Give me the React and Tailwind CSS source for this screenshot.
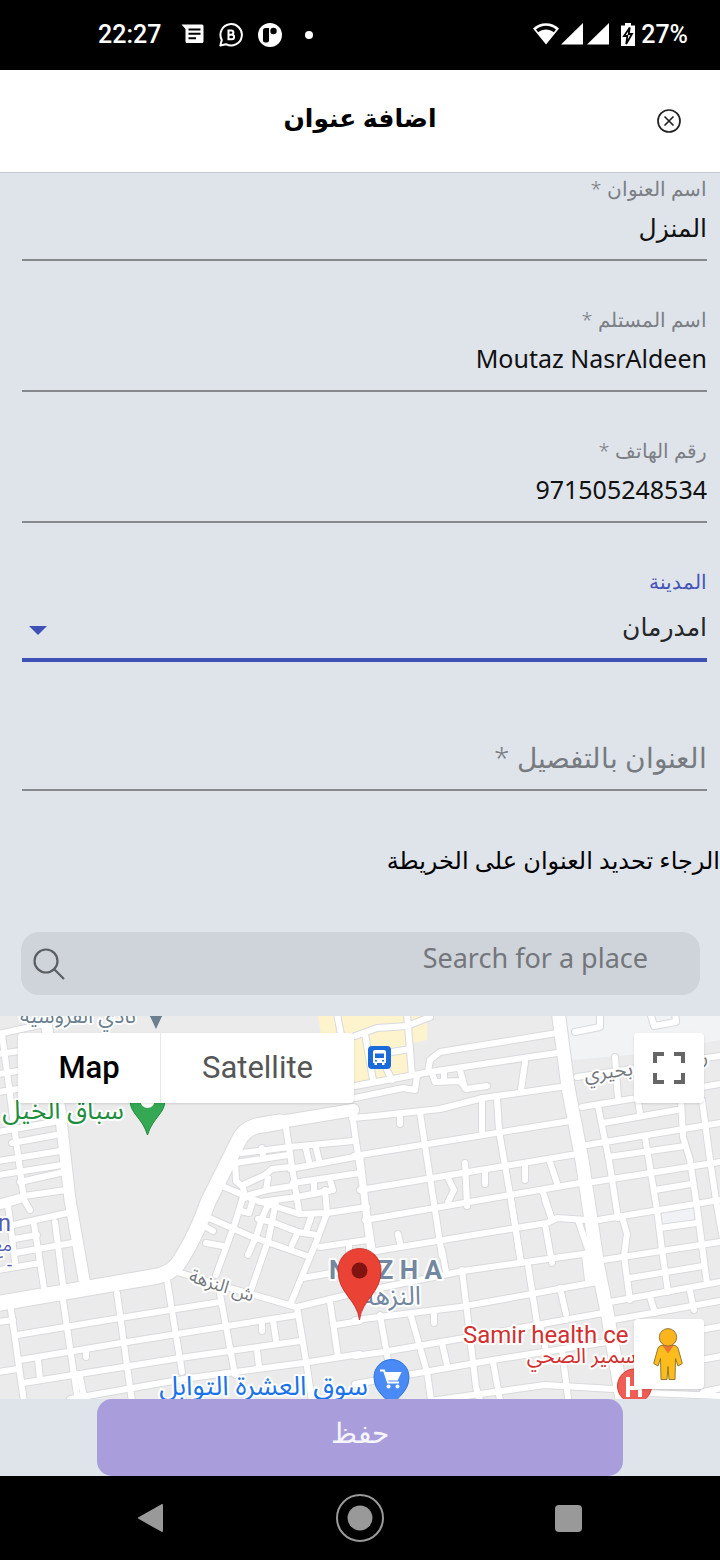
import React from "react";

const AREAS = [
  { fill: "#fdf3cd", d: "M318 1016H427V1040L413 1043V1078L330 1092Z" },
  { fill: "#f1f3f4", d: "M562 1016H720V1040L640 1054L572 1060Z" },
  { fill: "#f0f2f5", d: "M660 1214L694 1208L696 1222L662 1227Z" },
];

const MAIN_ROADS = [
  { w: 11, d: "M45 1016L60 1110L70 1200L85 1285" },
  { w: 15, d: "M-5 1304L158 1276Q172 1273 180 1261Q198 1232 208 1202L238 1142Q243 1130 256 1126L280 1122" },
  { w: 12, d: "M256 1126L353 1110" },
  { w: 13, d: "M558 1010L568 1087L582 1160L598 1267L608 1317L623 1405" },
];

const STREETS = [
  // blocks north of the centre
  "M352 1118L375 1116L440 1109L483 1098L567 1086",
  "M355 1086L430 1072L557 1053",
  "M428 1072L430 1060L440 1052L557 1033",
  "M355 1098L403 1088L415 1090L417 1076",
  "M355 1036L377 1028L407 1026L430 1017",
  "M407 1014L412 1075",
  "M365 1034L373 1080",
  "M337 1014L344 1050",
  "M392 1052L410 1049M387 1070L392 1080",
  "M432 1073L435 1082L460 1081L466 1089L487 1086M460 1070L465 1088M444 1073V1080",
  "M525 1062L521 1090",
  "M354 1156L570 1121",
  "M360 1190L577 1154",
  "M365 1220L580 1183",
  "M420 1113L435 1210L442 1256",
  "M482 1098V1131",
  "M497 1098L499 1131L511 1200L521 1263",
  "M400 1115V1124",
  "M550 1162L557 1183M543 1192L552 1220M525 1165V1180M485 1172V1184M465 1163L467 1204M448 1178L454 1190L448 1202",
  // small irregular blocks
  "M241 1153L290 1147L353 1141",
  "M235 1163L288 1155",
  "M290 1169L360 1156",
  "M243 1185L265 1175L272 1169L290 1167",
  "M293 1183L360 1173",
  "M243 1197L267 1190L293 1186",
  "M260 1202L297 1197L323 1192L333 1190L330 1180",
  "M268 1178L266 1190M262 1148L263 1156M314 1182V1194M306 1149L309 1162M316 1148L319 1160",
  "M286 1128L299 1212",
  "M352 1113L363 1190L370 1250",
  "M235 1160L236 1181L243 1187L245 1198",
  "M222 1186L255 1200L299 1214L327 1213L367 1207",
  "M325 1190L327 1213",
  "M320 1247L367 1240M303 1278L342 1271M349 1243V1252",
  "M207 1217L250 1236L310 1257",
  "M243 1197L235 1223L216 1275",
  "M253 1200L249 1213L241 1211",
  "M276 1202L268 1241L251 1290",
  "M268 1205L262 1218L257 1234L248 1255",
  "M258 1219L272 1222L298 1232L316 1235",
  "M298 1232L292 1245M312 1214L306 1232",
  "M327 1213L317 1240L290 1305",
  "M206 1227L213 1231M206 1243L223 1246",
  "M177 1272L230 1288L296 1307",
  "M360 1155L366 1207L373 1252",
  // south of the centre
  "M370 1252L547 1223L557 1218L587 1220",
  "M375 1289L463 1271L590 1253",
  "M355 1320L460 1307L597 1282",
  "M355 1356L383 1352L470 1337L603 1313",
  "M355 1384L493 1360L607 1342",
  "M430 1401L545 1385L613 1389",
  "M400 1243L398 1234M467 1204V1206",
  "M511 1200L521 1263M545 1224L552 1263M545 1200L552 1220",
  "M528 1265L537 1323M560 1288L566 1314M578 1220L590 1255L592 1282M585 1255L588 1280",
  "M442 1250L446 1272M462 1270L476 1387L480 1400",
  "M380 1315L388 1360M411 1316L427 1372L431 1400M434 1313V1323M442 1343L447 1365",
  "M493 1362L500 1400M562 1350L568 1398M540 1325L546 1350",
  // east side
  "M577 1077L720 1056",
  "M582 1107L637 1098L720 1084",
  "M603 1123L677 1110",
  "M587 1145L720 1123",
  "M608 1157L685 1146",
  "M593 1182L720 1162",
  "M655 1190L691 1184",
  "M598 1220L720 1200",
  "M660 1228L697 1223",
  "M603 1260L720 1242",
  "M630 1278L703 1266",
  "M610 1302L720 1282",
  "M613 1320L720 1301",
  "M615 1057L618 1099M638 1100L640 1114M598 1106L609 1160L618 1218",
  "M623 1220L627 1234L624 1256L630 1300",
  "M645 1137L657 1210L662 1250L668 1292",
  "M681 1100L683 1137L690 1160L697 1207L707 1284",
  "M702 1100L710 1160L716 1200L724 1245",
  "M650 1297L655 1313M690 1291L694 1310",
  "M575 1032L600 1027V1014M650 1012L654 1026L676 1022L675 1012",
  "M700 1330L722 1326M700 1360L722 1356M703 1392L722 1388M650 1393L722 1396",
  // west side, north of the avenue
  "M-2 1034L44 1024M-2 1054L20 1051M-2 1074L50 1066M-2 1092L30 1087",
  "M2 1034L12 1110L24 1200L30 1210",
  "M-2 1132L54 1122M12 1143L56 1135M-2 1161L60 1151M-2 1175L62 1165M20 1182L64 1172M-2 1203L24 1196L66 1190",
  "M-2 1207L20 1200M13 1225L67 1213M14 1239L37 1235M15 1253L72 1243M-2 1270L40 1263",
  "M8 1205L15 1262M34 1224L44 1288M55 1222L63 1285",
  // west side, south of the avenue
  "M17 1335L120 1318L220 1302",
  "M20 1360L127 1342L297 1315",
  "M23 1383L180 1358L300 1341",
  "M70 1399L190 1378L303 1363L360 1354",
  "M297 1307L347 1295M336 1325L360 1321",
  "M10 1303L24 1402M63 1300L78 1402M117 1293L132 1402M167 1280L182 1372M220 1294L235 1375",
  "M297 1307L307 1367L312 1402M330 1302L338 1357M273 1320L276 1340M262 1322V1331M257 1350L259 1367",
  "M38 1360L40 1380M80 1377L85 1402M86 1352V1357M-2 1322L13 1320M-2 1372L18 1369",
];

function StatusBar() {
  return (
    <div dir="ltr" className="flex h-[70px] items-center justify-between bg-black pr-8 pl-[98px] text-white">
      <div className="flex items-center">
        <span className="font-[Roboto] text-[25px] leading-8 font-medium">22:27</span>
        <svg className="ml-5 h-6 w-6" viewBox="0 0 24 24" fill="currentColor" aria-hidden="true">
          <path d="M.5 1.500H21A1.500 1.500 0 0 1 22.500 3V18.500A1.500 1.500 0 0 1 21 20H6A1.500 1.500 0 0 1 4.500 18.500V6ZM7.500 5.500v2h12v-2ZM7.500 9.800v2h12v-2Zm0 4.400v2h7.500v-2Z" fillRule="evenodd" />
        </svg>
        <svg className="ml-3.5 h-6 w-6" viewBox="0 0 24 24" fill="none" stroke="currentColor" aria-hidden="true">
          <path d="M1.300 22.500L2.800 17A10.700 10.700 0 1 1 7 21.200Z" strokeWidth="2" strokeLinejoin="round" />
          <path d="M9.500 7.500h2.800a2.100 2.100 0 0 1 0 4.200H9.500ZM9.500 11.700h3.300a2.300 2.300 0 0 1 0 4.600H9.500Z" strokeWidth="2" />
        </svg>
        <svg className="ml-[15px] h-6 w-6" viewBox="0 0 24 24" aria-hidden="true">
          <circle cx="12" cy="12" r="12" fill="#fff" />
          <path d="M5 7.500A2.500 2.500 0 0 1 7.500 5H11V17.500A2 2 0 0 1 9 19.500H7A2 2 0 0 1 5 17.500Z" fill="#000" />
          <circle cx="15.500" cy="8" r="3.200" fill="#000" />
        </svg>
        <span className="ml-[23px] h-2 w-2 rounded-full bg-white" />
      </div>
      <div className="flex items-center">
        <svg className="h-6 w-[26px]" viewBox="0 0 26 24" aria-hidden="true">
          <path d="M0 5.500C7-1.500 19-1.500 26 5.500L13 21.500Z" fill="#fff" />
          <path d="M3 6.500C9 1.500 17 1.500 23 6.500L20.800 9.200C16 5.500 10 5.500 5.200 9.200Z" fill="#000" />
        </svg>
        <svg className="ml-0.5 h-6 w-[22px]" viewBox="0 0 22 24" fill="#fff" aria-hidden="true"><path d="M22 0v21.500H0Z" /></svg>
        <svg className="ml-1 h-6 w-[22px]" viewBox="0 0 22 24" fill="#fff" aria-hidden="true"><path d="M22 0v21.500H0Z" /></svg>
        <svg className="ml-3 h-6 w-3.5" viewBox="0 0 14 24" aria-hidden="true">
          <path d="M4 0h6v2.500h4V23H0V2.500h4Z" fill="#fff" />
          <path d="M8.800 4.500L3 13H6.300L5.200 21L11 11H7.700Z" fill="#fff" stroke="#000" strokeWidth="1.800" />
        </svg>
        <span className="ml-1.5 font-[Roboto] text-[25px] leading-8 font-medium">27%</span>
      </div>
    </div>
  );
}

function TextField({ id, label, value, type = "text" }) {
  return (
    <div className="flex flex-col">
      <label htmlFor={id} className="h-8 text-xl leading-8 font-light text-[#7c7f84]">{label}</label>
      <input
        id={id}
        type={type}
        dir="rtl"
        defaultValue={value}
        className="h-14 w-full border-b-2 border-[#85898d] bg-transparent pb-2.5 text-right text-[25px] text-[#111] outline-none"
      />
    </div>
  );
}

function MapView() {
  return (
    <section dir="ltr" className="relative h-[383px] overflow-hidden bg-[#ebebec] font-[Roboto]">
      <svg className="h-full w-full" viewBox="0 1016 720 383" preserveAspectRatio="xMidYMid slice" role="img" aria-label="Map">
        {AREAS.map((a) => <path key={a.d} d={a.d} fill={a.fill} />)}
        <g fill="none" strokeLinecap="round" strokeLinejoin="round">
          <g stroke="#d9dadd">
            {STREETS.map((d) => <path key={d} d={d} strokeWidth="8" />)}
            {MAIN_ROADS.map((r) => <path key={r.d} d={r.d} strokeWidth={r.w + 2} />)}
          </g>
          <g stroke="#fff">
            {STREETS.map((d) => <path key={d} d={d} strokeWidth="6" />)}
            {MAIN_ROADS.map((r) => <path key={r.d} d={r.d} strokeWidth={r.w} />)}
          </g>
        </g>
        <g stroke="#fff" strokeWidth="4" strokeLinejoin="round" paintOrder="stroke" fontFamily="Roboto, 'Noto Sans Arabic', 'DejaVu Sans', sans-serif">
          <text x="20" y="1023" fontSize="21" fill="#6b7f8f">نادي الفروسية</text>
          <text x="124" y="1119" fontSize="26" fill="#1e8e3e" textAnchor="end">سباق الخيل</text>
          <text x="585" y="1081" fontSize="20" fill="#75797e" transform="rotate(-7 585 1081)">ب بحيري</text>
          <text x="701" y="1064" fontSize="20" fill="#75797e">ر</text>
          <text x="11" y="1231" fontSize="24" fill="#5358b5" textAnchor="end">n</text>
          <text x="12" y="1251" fontSize="18" fill="#5358b5" textAnchor="end">مع</text>
          <text x="12" y="1271" fontSize="18" fill="#5358b5" textAnchor="end">-</text>
          <text x="188" y="1281" fontSize="18" fill="#75797e" transform="rotate(18 188 1281)">ش النزهة</text>
          <text x="329" y="1279" fontSize="26" fontWeight="700" fill="#7487a0">N U Z H A</text>
          <text x="421" y="1305" fontSize="26" fill="#7487a0" textAnchor="end">النزهة</text>
          <text x="368" y="1395" fontSize="27" fill="#1a73e8" textAnchor="end">سوق العشرة التوابل</text>
          <text x="636" y="1363" fontSize="21" fill="#d32f2f" textAnchor="end">سمير الصحي</text>
          <text x="463" y="1343" fontSize="24" fill="#d32f2f">Samir health ce</text>
        </g>
        <path d="M149 1014H163L156 1029Z" fill="#6b7f8f" />
        <path d="M130 1100C130 1114 142 1117 147.500 1135C153 1117 165 1114 165 1100Z" fill="#34a853" stroke="#1e8e3e" />
        <circle cx="147.500" cy="1101" r="7" fill="#fff" />
        <rect x="368" y="1046" width="23" height="23" rx="4" fill="#1a6ad9" />
        <path d="M375 1050H384Q386 1050 386 1052V1063H384.500V1065H382V1063H377V1065H374.500V1063H373V1052Q373 1050 375 1050Z" fill="#fff" />
        <path d="M375 1053.500H384V1058H375Z" fill="#1a6ad9" />
        <circle cx="376" cy="1060.700" r="1" fill="#1a6ad9" />
        <circle cx="383" cy="1060.700" r="1" fill="#1a6ad9" />
        <path d="M391.500 1410C389 1397 374 1394 374 1377A17.500 17.500 0 0 1 409 1377C409 1394 394 1397 391.500 1410Z" fill="#4a8af4" stroke="#2f74e0" />
        <g fill="none" stroke="#fff" strokeWidth="2">
          <path d="M380 1370.500H384L388 1382.500H399" />
          <path d="M385.500 1373H400L397 1379.500H388Z" fill="#fff" />
        </g>
        <circle cx="388.500" cy="1386.500" r="2" fill="#fff" />
        <circle cx="397.500" cy="1386.500" r="2" fill="#fff" />
        <circle cx="634.500" cy="1386" r="17" fill="#ee5e56" stroke="#d93a33" />
        <path d="M628 1377V1397M640 1377V1397M628 1388H640" stroke="#fff" strokeWidth="4" fill="none" />
        <path d="M359.500 1320C357 1299 338 1294 338 1270A21.500 21.500 0 0 1 381 1270C381 1294 362 1299 359.500 1320Z" fill="#ea4335" stroke="#c5221f" strokeWidth="0.800" />
        <circle cx="359.500" cy="1270.500" r="8" fill="#811411" />
      </svg>
      <div className="absolute top-[17px] left-[18px] flex h-[70px] rounded-sm bg-white text-[31px] shadow">
        <button type="button" className="w-[142px] font-medium text-black">Map</button>
        <button type="button" className="w-[194px] border-l border-[#e8e8e8] text-[#565656]">Satellite</button>
      </div>
      <button type="button" aria-label="Fullscreen" className="absolute top-[17px] right-4 flex h-[70px] w-[70px] items-center justify-center rounded-sm bg-white shadow">
        <svg className="h-8 w-8" viewBox="0 0 32 32" fill="none" stroke="#666" strokeWidth="4" aria-hidden="true">
          <path d="M2 11V2H11M21 2H30V11M30 21V30H21M11 30H2V21" />
        </svg>
      </button>
      <button type="button" aria-label="Street View" className="absolute right-4 bottom-2.5 flex h-[70px] w-[70px] items-center justify-center rounded-sm bg-white pr-0.5 shadow">
        <svg className="h-[52px] w-[30px]" viewBox="0 0 30 52" stroke="#8a6d2f" strokeWidth="0.900" strokeLinejoin="round" aria-hidden="true">
          <path d="M8 17.500H22Q24.500 18 25.300 21L29.300 35.500L25 38L22.500 30.500L22 51.500H16L15 38.500L14 51.500H8L7.500 30.500L5 38L.7 35.500L4.700 21Q5.500 18 8 17.500Z" fill="#fbbc1c" />
          <path d="M9.500 17.500H20.500L15 25.500Z" fill="#ec7434" stroke="none" />
          <circle cx="15" cy="9.300" r="8.700" fill="#fbb51c" />
        </svg>
      </button>
    </section>
  );
}

export default function App() {
  return (
    <div dir="rtl" className="flex min-h-screen flex-col bg-[#dfe4eb] font-['Noto_Sans','DejaVu_Sans',sans-serif]">
      <StatusBar />
      <header className="grid h-[103px] grid-cols-[1fr_auto_1fr] items-center border-b border-[#c4c9d0] bg-white px-[38px]">
        <button type="button" aria-label="Close" className="h-[26px] w-[26px] justify-self-start">
          <svg className="h-full w-full" viewBox="0 0 26 26" fill="none" stroke="#222" strokeWidth="1.700" strokeLinecap="round" aria-hidden="true">
            <circle cx="13" cy="13" r="11" />
            <path d="M9 9L17 17M17 9L9 17" />
          </svg>
        </button>
        <h1 className="pb-2 text-[25px] leading-9 font-bold text-black">اضافة عنوان</h1>
      </header>
      <main className="flex flex-col">
        <form className="flex flex-col gap-[43px] pr-[13px] pl-[22px]">
          <TextField id="title" label="اسم العنوان *" value="المنزل" />
          <TextField id="recipient" label="اسم المستلم *" value="Moutaz NasrAldeen" />
          <TextField id="phone" label="رقم الهاتف *" value="971505248534" type="tel" />
          <div className="flex flex-col">
            <label htmlFor="city" className="h-8 text-xl leading-8 font-light text-[#4555b5]">المدينة</label>
            <div className="relative">
              <select id="city" className="h-16 w-full appearance-none border-b-4 border-[#3f51b5] bg-transparent pb-0.5 text-[25px] text-[#25272a] outline-none">
                <option>امدرمان</option>
              </select>
              <svg className="pointer-events-none absolute top-7 left-[7px] h-[9px] w-[18px]" viewBox="0 0 18 9" fill="#3f51b5" aria-hidden="true">
                <path d="M0 0H18L9 9Z" />
              </svg>
            </div>
          </div>
          <input
            aria-label="العنوان بالتفصيل"
            placeholder="العنوان بالتفصيل *"
            className="mt-[22px] h-16 w-full border-b-2 border-[#85898d] bg-transparent pb-0.5 text-[28px] font-light outline-none placeholder:text-[#777b80] placeholder:opacity-100"
          />
        </form>
        <p className="mt-[46px] text-2xl leading-[46px] text-black">الرجاء تحديد العنوان على الخريطة</p>
        <div className="mt-[49px] mr-5 mb-[21px] ml-[21px] flex h-[63px] items-center rounded-[18px] bg-[#cfd3da] pr-[52px] pl-3">
          <input
            type="search"
            aria-label="Search for a place"
            placeholder="Search for a place"
            className="h-full min-w-0 flex-1 bg-transparent pb-3 text-right text-[27px] outline-none placeholder:text-[#73777b] placeholder:opacity-100"
          />
          <svg className="h-8 w-8" viewBox="0 0 32 32" fill="none" stroke="#5b5e62" strokeWidth="2.200" aria-hidden="true">
            <circle cx="13" cy="13" r="11.500" />
            <path d="M21.500 21.500L31 31" />
          </svg>
        </div>
        <MapView />
        <div className="flex justify-center">
          <button type="button" className="h-[77px] w-[73%] rounded-[15px] bg-[#a99edb] pb-3 text-[28px] font-light text-white/90">حفظ</button>
        </div>
      </main>
      <nav dir="ltr" className="flex h-[84px] items-center justify-between bg-black px-[138px]">
        <button type="button" aria-label="Back" className="h-7 w-[26px]">
          <svg className="h-full w-full" viewBox="0 0 26 28" fill="#999" stroke="#999" strokeWidth="2" strokeLinejoin="round" aria-hidden="true"><path d="M1 14L24 1V27Z" /></svg>
        </button>
        <button type="button" aria-label="Home" className="h-12 w-12">
          <svg className="h-full w-full" viewBox="0 0 48 48" aria-hidden="true">
            <circle cx="24" cy="24" r="23" fill="none" stroke="#999" strokeWidth="2" />
            <circle cx="24" cy="24" r="12.500" fill="#999" />
          </svg>
        </button>
        <button type="button" aria-label="Recent apps" className="h-[27px] w-[27px] rounded-sm bg-[#999]" />
      </nav>
    </div>
  );
}
